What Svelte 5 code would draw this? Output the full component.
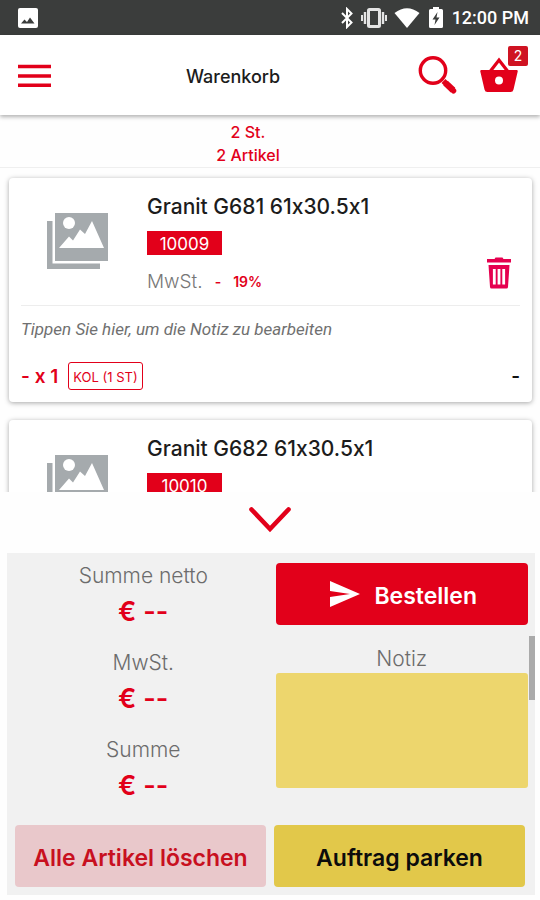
<script>
  const items = [
    { name: 'Granit G681 61x30.5x1', number: '10009', vat: '19%', unit: 'KOL (1 ST)' },
    { name: 'Granit G682 61x30.5x1', number: '10010', vat: '19%', unit: 'KOL (1 ST)' }
  ];
  const sums = ['Summe netto', 'MwSt.', 'Summe'];
  let note = $state('');
</script>

<div class="app">
  <div class="status">
    <svg class="shot" width="20" height="20" viewBox="0 0 20 20"><rect width="20" height="20" rx="2" fill="#fff" /><path d="M3 15.500L6.500 11.500L9 14L12 9.500L16.500 15.500Z" fill="#3b3d3c" /></svg>
    <svg width="14" height="22" viewBox="0 0 14 22" fill="none" stroke="#fff" stroke-width="2"><path d="M2 6L11.500 15.500L7 20V2L11.500 6.500L2 16" /></svg>
    <svg width="26" height="20" viewBox="0 0 26 20" fill="none" stroke="#e4e4e4"><rect x="7.500" y="1.500" width="11" height="17" rx="1" stroke-width="3" /><path d="M4 4V16M22 4V16" stroke-width="2.400" /><path d="M1 7V13M25 7V13" stroke-width="2" /></svg>
    <svg width="26" height="20" viewBox="0 0 26 20"><path d="M0.500 5Q13 -4.500 25.500 5L13 20Z" fill="#fff" /></svg>
    <svg class="battery" width="14" height="21" viewBox="0 0 14 21"><path d="M4 0H10V2H12.500Q14 2 14 3.500V19.500Q14 21 12.500 21H1.500Q0 21 0 19.500V3.500Q0 2 1.500 2H4Z" fill="#fff" /><path d="M8.500 5L3.500 12.500H6.500L5.500 18L10.500 10.500H7.500Z" fill="#3b3d3c" /></svg>
    <span>12:00 PM</span>
  </div>

  <header>
    <button class="icon" aria-label="Menü">
      <svg width="34" height="24" viewBox="0 0 34 24" stroke="#e2001a" stroke-width="3.400"><path d="M0 3.500H33M0 13H33M0 22.300H33" /></svg>
    </button>
    <h1>Warenkorb</h1>
    <button class="icon" aria-label="Suchen">
      <svg width="40" height="40" viewBox="0 0 40 40" fill="none" stroke="#e2001a"><circle cx="15" cy="15.500" r="12.700" stroke-width="3.400" /><path d="M25.500 26L29 29.500" stroke-width="5.500" /><path d="M27.500 28L35 35.200" stroke-width="6.500" stroke-linejoin="round" /><path d="M34.500 34.800L35.500 35.800" stroke-width="5.500" stroke-linecap="round" /></svg>
    </button>
    <button class="icon basket" aria-label="Warenkorb, 2 Artikel">
      <svg width="38" height="36" viewBox="0 0 38 36"><path d="M10.500 14L19 3L27.500 14" fill="none" stroke="#e2001a" stroke-width="3.200" /><path fill-rule="evenodd" d="M1.500 13H36.500Q38 13 37.700 14.500L33.500 32.500Q33 35 30.500 35H7.500Q5 35 4.500 32.500L0.300 14.500Q0 13 1.500 13ZM19 19.500A4 4 0 1 0 19 27.500A4 4 0 1 0 19 19.500Z" fill="#e2001a" /></svg>
      <span class="badge">2</span>
    </button>
  </header>

  <div class="counts">
    <p>2 St.</p>
    <p>2 Artikel</p>
  </div>

  <main>
    {#each items as item}
      <article>
        <div class="top">
          <svg class="photo" width="61" height="57" viewBox="0 0 61 57"><path d="M0 9H5.500V51.500H53V57H0Z" fill="#a5aaad" /><rect x="8" y="1" width="53" height="48" fill="#a5aaad" /><circle cx="22" cy="11" r="6" fill="#fff" /><path d="M12 36L22 24.500L26 28.500L33 17.500L38 22L45 9L57 36Z" fill="#fff" /></svg>
          <div class="info">
            <h2>{item.name}</h2>
            <span class="number">{item.number}</span>
            <p class="vat">MwSt. <b>-</b><b>{item.vat}</b></p>
          </div>
          <button class="icon" aria-label="{item.name} löschen">
            <svg width="24" height="32" viewBox="0 0 24 32"><path d="M0 2H7.500L8.500 0.500H15.500L16.500 2H24V5.500H0Z" fill="#e5004f" /><path d="M1.500 8H22.500L21 30Q20.900 31.500 19.500 31.500H4.500Q3.100 31.500 3 30Z" fill="#e5004f" /><path d="M7.300 12V27.500M12 12V27.500M16.700 12V27.500" stroke="#fff" stroke-width="2.800" /></svg>
          </button>
        </div>
        <input class="note" type="text" aria-label="Notiz zu {item.name}" placeholder="Tippen Sie hier, um die Notiz zu bearbeiten" />
        <div class="quantity">
          <b>- x 1</b>
          <button class="unit">{item.unit}</button>
          <span class="price">-</span>
        </div>
      </article>
    {/each}
  </main>

  <button class="toggle" aria-label="Zusammenfassung einklappen">
    <svg width="44" height="28" viewBox="0 0 44 28"><path d="M3.500 3.500L22 23L40.500 3.500" fill="none" stroke="#e2001a" stroke-width="4.600" stroke-linecap="round" /></svg>
  </button>

  <section class="panel">
    <div class="columns">
      <dl>
        {#each sums as sum}
          <div>
            <dt>{sum}</dt>
            <dd>€ --</dd>
          </div>
        {/each}
      </dl>
      <div class="order">
        <button class="action send">
          <svg width="30" height="26" viewBox="0 0 30 26"><path d="M0 0L30 13L0 26V16L20 13L0 10Z" fill="#fff" /></svg>
          Bestellen
        </button>
        <label for="note">Notiz</label>
        <textarea id="note" bind:value={note}></textarea>
      </div>
    </div>
    <div class="actions">
      <button class="action clear">Alle Artikel löschen</button>
      <button class="action park">Auftrag parken</button>
    </div>
    <div class="thumb"></div>
  </section>
</div>

<style>
  :global(body) {
    margin: 0;
  }
  .app {
    display: flex;
    flex-direction: column;
    height: 100vh;
    background: #fefefe;
    color: #1c1c1c;
    font-family: Inter, "Liberation Sans", sans-serif;
    font-variant-ligatures: no-contextual;
  }
  h1, h2, p, dl, dd {
    margin: 0;
  }
  button {
    font-family: inherit;
    cursor: pointer;
  }
  svg {
    display: block;
  }
  .icon {
    padding: 0;
    border: 0;
    background: none;
  }
  .status {
    display: flex;
    align-items: center;
    gap: 7px;
    height: 35px;
    padding: 0 11px 0 18px;
    background: #3b3d3c;
    color: #fff;
    font: 500 18px/35px Roboto, sans-serif;
  }
  .shot {
    margin-right: auto;
  }
  .battery {
    margin: 0 2px;
  }
  header {
    position: relative;
    display: flex;
    align-items: center;
    gap: 22px;
    height: 80px;
    padding: 0 22px 0 18px;
    background: #fff;
    box-shadow: 0 2px 4px rgba(0, 0, 0, 0.3);
  }
  h1 {
    flex: 1;
    padding: 4px 0 0 112px;
    font-size: 18px;
    font-weight: 500;
    line-height: 24px;
  }
  .basket {
    position: relative;
  }
  .badge {
    position: absolute;
    top: -11px;
    right: -10px;
    width: 20px;
    border-radius: 2px;
    background: #cf1322;
    color: #fff;
    font-size: 14px;
    line-height: 20px;
  }
  .counts {
    padding: 6px 44px 0 0;
    border-bottom: 1px solid #efefef;
    color: #e2001a;
    font-size: 16px;
    font-weight: 500;
    line-height: 23px;
    text-align: center;
  }
  main {
    display: flex;
    flex: 1 1 0;
    flex-direction: column;
    gap: 18px;
    padding: 10px 8px 0 9px;
    overflow-y: auto;
    scrollbar-width: none;
  }
  article {
    flex: none;
    padding: 0 12px;
    border-radius: 4px;
    background: #fff;
    box-shadow: 0 1px 5px rgba(0, 0, 0, 0.35);
  }
  .top {
    display: flex;
    padding: 14px 9px 8px 26px;
    border-bottom: 1px solid #ededed;
  }
  .photo {
    margin: 20px 39px 0 0;
  }
  .info {
    flex: 1;
  }
  h2 {
    font-size: 21px;
    font-weight: 500;
    line-height: 30px;
  }
  .number {
    display: block;
    width: 75px;
    margin: 9px 0 12px;
    padding-top: 2px;
    background: #e2001a;
    color: #fff;
    font-size: 17px;
    line-height: 22px;
    text-align: center;
  }
  .vat {
    display: flex;
    gap: 12px;
    color: #777;
    font-size: 19px;
    font-weight: 300;
    line-height: 30px;
  }
  .vat b {
    color: #e2001a;
    font-size: 14px;
    font-weight: 600;
  }
  .top .icon {
    align-self: flex-end;
    margin-bottom: 8px;
  }
  .note {
    box-sizing: border-box;
    width: 100%;
    height: 44px;
    padding: 2px 0 0;
    border: 0;
    background: none;
    color: #333;
    font: italic 17px/24px Roboto, sans-serif;
  }
  .note::placeholder {
    color: #707070;
    opacity: 1;
  }
  .quantity {
    display: flex;
    align-items: center;
    gap: 10px;
    padding: 12px 0;
    color: #e2001a;
    font-size: 19px;
  }
  .quantity b {
    font-weight: 600;
  }
  .unit {
    height: 28px;
    padding: 2px 4px 0;
    border: 1px solid #e2001a;
    border-radius: 3px;
    background: none;
    color: #e2001a;
    font-size: 13px;
  }
  .price {
    margin-left: auto;
    color: #111;
    font-weight: 600;
  }
  .toggle {
    display: flex;
    justify-content: center;
    align-items: center;
    height: 61px;
    padding: 0 0 6px;
    border: 0;
    background: #fefefe;
  }
  .panel {
    position: relative;
    margin: 0 5px 5px 7px;
    padding: 10px 10px 8px 8px;
    background: #f1f1f1;
  }
  .columns,
  .actions {
    display: grid;
    grid-template-columns: repeat(2, minmax(0, 1fr));
    gap: 8px;
  }
  .columns {
    margin: 0 -3px 16px 0;
  }
  dl {
    display: flex;
    flex-direction: column;
    gap: 15px;
    padding-left: 4px;
    text-align: center;
  }
  dt,
  .order label {
    color: #6c6c6c;
    font-size: 21px;
    font-weight: 300;
    line-height: 26px;
  }
  dd {
    color: #e2001a;
    font-size: 27px;
    font-weight: 600;
    line-height: 46px;
  }
  .order {
    display: flex;
    flex-direction: column;
  }
  .order label {
    padding: 21px 0 1px;
    text-align: center;
  }
  textarea {
    box-sizing: border-box;
    height: 115px;
    padding: 10px;
    border: 0;
    border-radius: 3px;
    background: #edd66d;
    font: 18px/24px Inter, sans-serif;
    resize: none;
  }
  .action {
    display: flex;
    justify-content: center;
    align-items: center;
    gap: 14px;
    height: 62px;
    padding: 4px 0 0;
    border: 0;
    border-radius: 4px;
    font-size: 23px;
    font-weight: 600;
    white-space: nowrap;
  }
  .send {
    padding-left: 4px;
    background: #e2001a;
    color: #fff;
  }
  .send svg {
    margin-bottom: 4px;
  }
  .clear {
    background: #e9c8cb;
    color: #c8101f;
  }
  .park {
    background: #e2c84a;
    color: #0c0c0c;
  }
  .thumb {
    position: absolute;
    top: 83px;
    right: 0;
    width: 6px;
    height: 64px;
    background: #aaa;
  }
</style>
